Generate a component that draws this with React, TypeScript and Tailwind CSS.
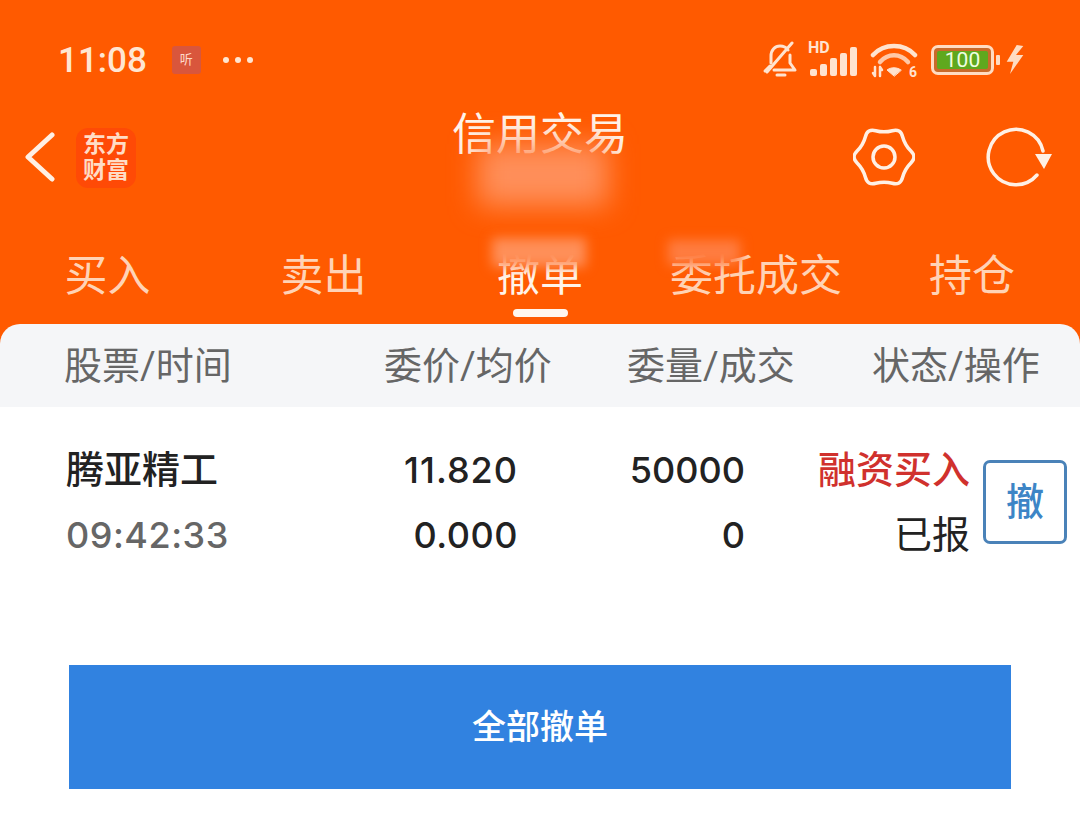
const CJK = "font-['Roboto','Noto_Sans_CJK_SC',sans-serif]";
const NUM = "font-['Inter','Noto_Sans_CJK_SC',sans-serif]";

function MuteBell() {
  return (
    <svg width="36" height="38" viewBox="0 0 36 38" fill="none" stroke="#ffe3cf" strokeWidth="3" strokeLinecap="round" strokeLinejoin="round">
      <path d="M9 22 V15 C9 9 13 5 18 5 C21 5 24 6 26 9" />
      <path d="M28 14 V22 L33 29 H12" />
      <path d="M3 30 L8 25" />
      <path d="M30 2 L5 31" />
      <path d="M15 34 H23" />
    </svg>
  );
}

function Signal() {
  return (
    <div className="relative w-[48px] h-[36px]">
      <span className="absolute left-[-2px] top-[-1px] text-[16px] leading-[14px] font-bold text-[#ffe3cf] font-['Roboto',sans-serif]">HD</span>
      <div className="absolute inset-0 flex items-end gap-[3px] pb-[2px]">
        <div className="w-[7px] h-[7px] rounded-[2px] bg-[#ffe3cf]" />
        <div className="w-[7px] h-[12px] rounded-[2px] bg-[#ffe3cf]" />
        <div className="w-[7px] h-[18px] rounded-[2px] bg-[#ffe3cf]" />
        <div className="w-[7px] h-[23px] rounded-[2px] bg-[#ffe3cf]" />
        <div className="w-[7px] h-[29px] rounded-[2px] bg-[#ffe3cf]" />
      </div>
    </div>
  );
}

function Wifi() {
  return (
    <div className="relative w-[48px] h-[36px]">
      <svg width="48" height="36" viewBox="0 0 48 36" fill="none" stroke="#ffe3cf" strokeLinecap="round">
        <path d="M3 13 C14 1 34 1 45 13" strokeWidth="4.5" />
        <path d="M10 20 C18 11 30 11 38 20" strokeWidth="4.5" opacity="0.8" />
        <path d="M24 34 L17 28 C21 25 27 25 31 28 Z" fill="#ffe3cf" strokeWidth="1" />
        <path d="M5 25 V34 M10 34 V25 M3 31 L5 34 M12 28 L10 25" strokeWidth="2.5" />
      </svg>
      <span className="absolute right-[1px] top-[23px] text-[14px] leading-[14px] font-bold text-[#ffe3cf] font-['Roboto',sans-serif]">6</span>
    </div>
  );
}

function Battery() {
  return (
    <div className="flex items-center gap-[2px]">
      <div className="w-[63px] h-[30px] rounded-[7px] border-[3px] border-[#ffdcc2] bg-[#c96a2a] p-[3px]">
        <div className="h-full rounded-[2px] bg-[#5fa81e] flex items-center justify-center text-[21px] leading-none text-[#f0ffe0] font-['Roboto',sans-serif]">
          100
        </div>
      </div>
      <div className="w-[4px] h-[10px] rounded-[1px] bg-[#ffdcc2]" />
    </div>
  );
}

function Bolt() {
  return (
    <svg width="18" height="30" viewBox="0 0 18 30" fill="#ffdcc2">
      <path d="M10.7 0 L0.7 16.7 H7.3 L4 29 L17.3 10 H10 L17.3 1 Z" />
    </svg>
  );
}

// wavy six lobed outline, lobes at 0, 60, 120... degrees
function gearPath() {
  const pts: [number, number][] = [];
  for (let i = 0; i < 12; i++) {
    const a = (i * 30 * Math.PI) / 180;
    const r = i % 2 === 0 ? 33 : 24;
    pts.push([31 + r * Math.cos(a), 30 + r * Math.sin(a)]);
  }
  const mid = (p: [number, number], q: [number, number]) => [(p[0] + q[0]) / 2, (p[1] + q[1]) / 2];
  const start = mid(pts[11], pts[0]);
  let d = `M${start[0].toFixed(1)} ${start[1].toFixed(1)}`;
  pts.forEach((p, i) => {
    const m = mid(p, pts[(i + 1) % 12]);
    d += ` Q${p[0].toFixed(1)} ${p[1].toFixed(1)} ${m[0].toFixed(1)} ${m[1].toFixed(1)}`;
  });
  return d + " Z";
}

function Gear() {
  return (
    <svg width="62" height="60" viewBox="0 0 62 60" fill="none" stroke="#fff0e4" strokeWidth="3.5" strokeLinejoin="round">
      <path d={gearPath()} />
      <circle cx="31" cy="30" r="11" />
    </svg>
  );
}

function Refresh() {
  return (
    <svg width="66" height="60" viewBox="0 0 66 60" fill="none">
      <path d="M51 48 A27.7 27.7 0 1 1 57 24" stroke="#fff0e4" strokeWidth="3.5" strokeLinecap="round" />
      <path d="M49 27 H66 L58 42 Z" fill="#fff0e4" />
    </svg>
  );
}

export default function App() {
  return (
    <div className={`relative w-[1080px] h-[829px] overflow-hidden bg-white ${CJK}`}>
      {/* Orange header */}
      <div className="bg-[#ff5a00] h-[346px] pt-[38px]">
        {/* Status bar */}
        <div className="flex items-center h-[44px] pl-[58px] pr-[56px]">
          <span className="text-[35px] leading-none font-medium text-[#ffe6d2]">11:08</span>
          <div className="ml-[25px] w-[29px] h-[28px] rounded-[3px] bg-[#d9563c] flex items-center justify-center text-[13px] text-[#ffd9c9]">
            听
          </div>
          <div className="ml-[22px] flex gap-[6px]">
            <div className="w-[6px] h-[6px] rounded-full bg-[#ffe6d2]" />
            <div className="w-[6px] h-[6px] rounded-full bg-[#ffe6d2]" />
            <div className="w-[6px] h-[6px] rounded-full bg-[#ffe6d2]" />
          </div>
          <div className="ml-auto flex items-center">
            <MuteBell />
            <div className="ml-[12px]"><Signal /></div>
            <div className="ml-[12px]"><Wifi /></div>
            <div className="ml-[13px]"><Battery /></div>
            <div className="ml-[6px]"><Bolt /></div>
          </div>
        </div>

        {/* Nav */}
        <div className="relative flex items-start h-[152px] pl-[24px] pr-[28px] pt-[49px]">
          <svg width="32" height="50" viewBox="0 0 32 50" fill="none" stroke="#fff0e4" strokeWidth="5" strokeLinecap="round" strokeLinejoin="round" className="mt-[1px]">
            <path d="M28 3 L4 25 L28 47" />
          </svg>
          <div className="ml-[20px] -mt-[3px] w-[60px] h-[60px] rounded-[12px] bg-[#ff4a06] flex flex-col items-center justify-center text-[23px] leading-[26px] font-bold text-[#ffdcc6]">
            <span>东方</span>
            <span>财富</span>
          </div>
          <div className="absolute left-0 right-0 top-[21px] text-center text-[44px] leading-[64px] text-[#fff4ea]">
            信用交易
          </div>
          <div className="ml-auto flex items-center gap-[71px] -mt-[4px]">
            <Gear />
            <Refresh />
          </div>
        </div>

        {/* Tabs */}
        <div className="flex h-[100px] text-[43px] leading-[60px] text-[#ffd3b6]">
          <div className="w-[215px] text-center pt-[12px]">买入</div>
          <div className="w-[217px] text-center pt-[12px]">卖出</div>
          <div className="w-[216px] flex flex-col items-center pt-[12px] text-[#fff4ea]">
            撤单
            <div className="mt-[3px] w-[55px] h-[8px] rounded-full bg-[#fff6ee]" />
          </div>
          <div className="w-[216px] text-center pt-[12px] whitespace-nowrap">委托成交</div>
          <div className="w-[216px] text-center pt-[12px]">持仓</div>
        </div>
      </div>

      {/* Blurred masks over account info */}
      <div className="absolute left-[478px] top-[144px] w-[130px] h-[62px] bg-[#ff8f5a] blur-[14px]" />
      <div className="absolute left-[492px] top-[238px] w-[94px] h-[29px] bg-[#ff8f58] blur-[6px]" />
      <div className="absolute left-[668px] top-[240px] w-[72px] h-[25px] bg-[#ff7c40] blur-[6px]" />

      {/* Content */}
      <div className="absolute left-0 right-0 top-[324px]">
        <div className="flex items-center h-[83px] rounded-t-[20px] bg-[#f5f6f8] text-[38px] leading-none text-[#666666] whitespace-nowrap">
          <div className="pl-[64px] w-[384px]">股票/时间</div>
          <div className="w-[243px]">委价/均价</div>
          <div className="w-[245px]">委量/成交</div>
          <div>状态/操作</div>
        </div>

        <div className="relative h-[130px] pt-[31px] text-[38px] leading-[65px] font-medium text-[#222222]">
          <div className="flex">
            <div className="w-[316px] pl-[66px]">腾亚精工</div>
            <div className={`w-[202px] text-right text-[36px] tracking-[1px] ${NUM}`}>11.820</div>
            <div className={`w-[227px] text-right text-[36px] ${NUM}`}>50000</div>
            <div className="w-[225px] text-right text-[#d0312d]">融资买入</div>
          </div>
          <div className="flex">
            <div className={`w-[316px] pl-[66px] text-[36px] text-[#666666] whitespace-nowrap tracking-[0.5px] ${NUM}`}>09:42:33</div>
            <div className={`w-[202px] text-right text-[36px] tracking-[0.5px] ${NUM}`}>0.000</div>
            <div className={`w-[227px] text-right text-[36px] ${NUM}`}>0</div>
            <div className="w-[225px] text-right font-normal">已报</div>
          </div>
          <div className="absolute left-[983px] top-[53px] w-[84px] h-[84px] rounded-[7px] border-[3px] border-[#4a82b8] flex items-center justify-center text-[38px] leading-none font-medium text-[#3d85c6]">
            撤
          </div>
        </div>

        <div className="mx-[69px] mt-[128px] w-[942px] h-[124px] bg-[#3182e0] flex items-center justify-center text-[34px] leading-none font-medium text-white">
          全部撤单
        </div>
      </div>
    </div>
  );
}
